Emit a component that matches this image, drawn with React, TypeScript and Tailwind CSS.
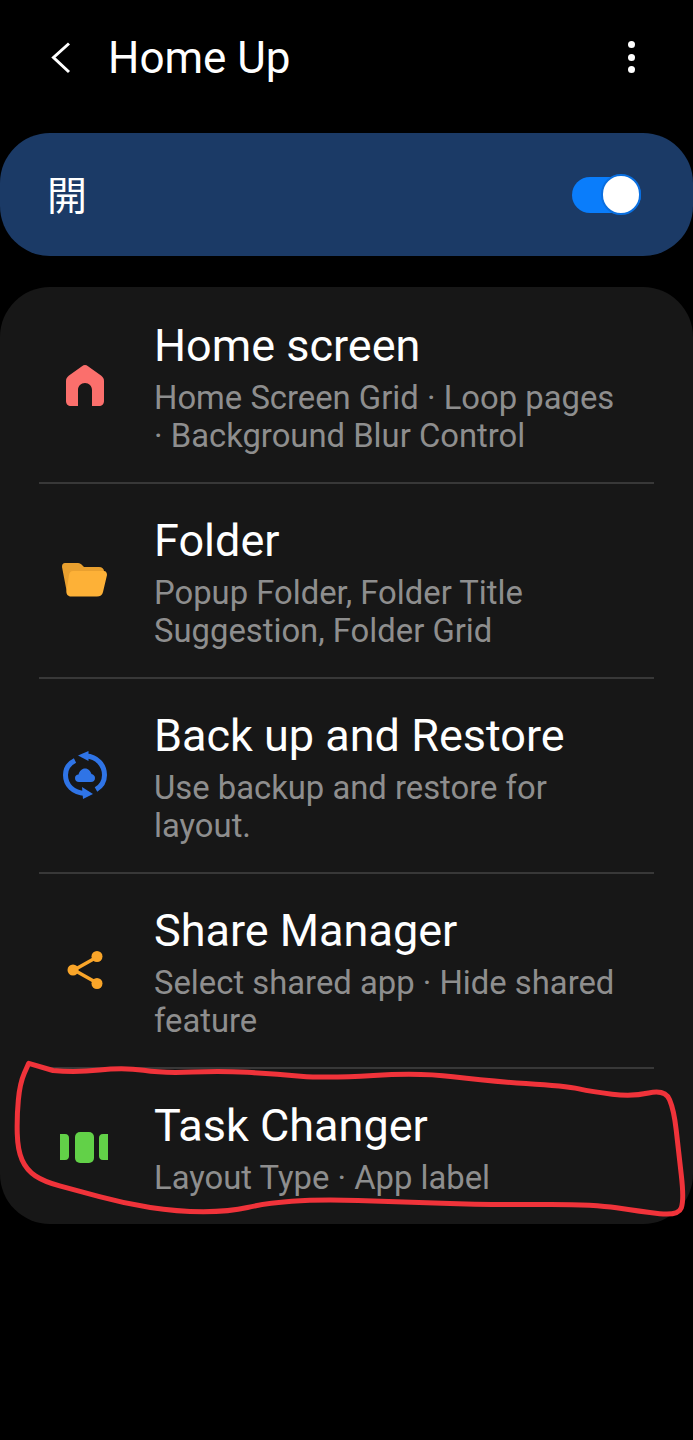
import React from 'react';

const FONT = "font-['Roboto','Noto_Sans_CJK_TC',sans-serif]";

const HomeIcon = () => (
    <svg width="38" height="41" viewBox="0 0 38 41">
        <path
            fillRule="evenodd"
            fill="#fb6f6c"
            d="M19 0 C20 0 21 .5 22 1.200 L35 10.500 C37 12 38 13.500 38 16 L38 36 C38 39 36 41 33 41 L26 41 L26 25 C26 21 23 18 19 18 C15 18 12 21 12 25 L12 41 L5 41 C2 41 0 39 0 36 L0 16 C0 13.500 1 12 3 10.500 L16 1.200 C17 .5 18 0 19 0 Z"
        />
    </svg>
);

const FolderIcon = () => (
    <svg className="-ml-[2px]" width="45" height="34" viewBox="0 0 45 34">
        <path fill="#e9a02f" d="M3 0 L16 0 C18 0 19 1 20 2 L22 4 L37 4 C40 4 42 6 42 8 L10 30 L5 30 L0 4 C0 1 1 0 3 0 Z" />
        <path fill="#fdb137" d="M11 8 L42 8 C44 8 45 10 45 12 L41 29 C40.500 32 38 33.500 35 33.500 L9 33.500 C6 33.500 4 31 4.500 28 L7 12 C7.500 9.500 9 8 11 8 Z" />
    </svg>
);

const SyncIcon = () => (
    <svg width="44" height="48" viewBox="0 0 44 48" fill="none">
        <path d="M12 9.500 C5 13 2.500 19 2.500 24 C2.500 34 10 42 22 42.500" stroke="#2f74e6" strokeWidth="5" />
        <path d="M33 38.500 C39 35 41.500 29 41.500 24 C41.500 14 34 5.500 23 5" stroke="#2f74e6" strokeWidth="5" />
        <path d="M25.500 0 L15 4.500 L25.500 10 Z" fill="#2f74e6" />
        <path d="M19 36 L30 43 L20 48 Z" fill="#2f74e6" />
        <path
            fill="#2f74e6"
            d="M16 31 C13.500 31 12 29.500 12 27 C12 25 13.500 23.500 15.500 23.500 C16.500 20 19 17.500 22 17.500 C25.500 17.500 27.500 20 28.500 23 C30.500 23.500 32 25 32 27 C32 29.500 30.500 31 28 31 Z"
        />
    </svg>
);

const ShareIcon = () => (
    <svg className="ml-[1px]" width="38" height="40" viewBox="0 0 38 40" fill="#f9a529">
        <path d="M7 20 L31 6.500 M7 20 L31 33.500" stroke="#f9a529" strokeWidth="3.500" />
        <circle cx="6" cy="20" r="5.500" />
        <circle cx="30" cy="6.500" r="5.500" />
        <circle cx="30" cy="33.500" r="5.500" />
    </svg>
);

const TaskIcon = () => (
    <svg className="-ml-[2px]" width="48" height="31" viewBox="0 0 48 31" fill="#62d148">
        <path d="M0 2 L5 2 C8 2 9 4 9 6 L9 24 C9 26 8 28 5 28 L0 28 Z" />
        <rect x="15" y="0" width="19" height="31" rx="5" />
        <path d="M48 2 L43 2 C40 2 39 4 39 6 L39 24 C39 26 40 28 43 28 L48 28 Z" />
    </svg>
);

interface Row {
    title: string;
    lines: string[];
    icon: React.ReactNode;
}

const rows: Row[] = [
    { title: 'Home screen', lines: ['Home Screen Grid · Loop pages', '· Background Blur Control'], icon: <HomeIcon /> },
    { title: 'Folder', lines: ['Popup Folder, Folder Title', 'Suggestion, Folder Grid'], icon: <FolderIcon /> },
    { title: 'Back up and Restore', lines: ['Use backup and restore for', 'layout.'], icon: <SyncIcon /> },
    { title: 'Share Manager', lines: ['Select shared app · Hide shared', 'feature'], icon: <ShareIcon /> },
    { title: 'Task Changer', lines: ['Layout Type · App label'], icon: <TaskIcon /> },
];

// red pen scribble round the last row, traced from the reference
const scribble = [
    [65, 40], [45, 100], [38, 200], [40, 300], [60, 360], [100, 395], [170, 420], [280, 460], [400, 485], [520, 485],
    [600, 460], [720, 448], [900, 455], [1100, 465], [1340, 462], [1450, 485], [1535, 497], [1548, 450], [1535, 300],
    [1525, 180], [1505, 118], [1430, 140], [1340, 125], [1280, 108], [1100, 93], [950, 68], [740, 85], [620, 72],
    [500, 62], [370, 70], [280, 52], [170, 68], [70, 55],
].map(([x, y]) => [(x * 693) / 1568, 1050 + y / 3]);

const scribblePath = scribble
    .map(([x, y], i) => {
        if (i === 0) return `M${x} ${y}`;
        const [px, py] = scribble[i - 1];
        return `Q${px} ${py} ${(px + x) / 2} ${(py + y) / 2}`;
    })
    .join(' ');

export default function App() {
    return (
        <div className={`relative h-[1440px] w-[693px] overflow-hidden bg-black ${FONT}`}>
            <div className="flex h-[133px] items-start justify-between pl-[51px] pr-[58px] pt-[33px]">
                <div className="flex items-center">
                    <svg width="20" height="32" viewBox="0 0 20 32" fill="none">
                        <path d="M18 1.500 L2.500 15.500 L18 30" stroke="#fff" strokeWidth="3" />
                    </svg>
                    <span className="ml-[37px] text-[44px] leading-[50px] text-white">Home Up</span>
                </div>
                <div className="mt-[8px] flex flex-col gap-[5.500px]">
                    <div className="size-[7px] rounded-full bg-white" />
                    <div className="size-[7px] rounded-full bg-white" />
                    <div className="size-[7px] rounded-full bg-white" />
                </div>
            </div>

            <div className="flex h-[123px] items-center justify-between rounded-[50px] bg-[#1b3a66] pl-[47px] pr-[52px]">
                <span className="mt-[4px] text-[40px] leading-[50px] text-white">開</span>
                <div className="flex h-[36px] w-[69px] items-center justify-end rounded-full bg-[#0a7dfb]">
                    <div className="h-[41px] w-[40px] rounded-full border-2 border-[#0a6fe0] bg-white" />
                </div>
            </div>

            <div className="mt-[31px] rounded-[50px] bg-[#171717]">
                {rows.map((row, i) => (
                    <div key={row.title}>
                        {i > 0 && <div className="mx-[39px] h-[2px] bg-[#383838]" />}
                        <div className={`flex items-center pb-[27px] ${i === 0 ? 'pt-[34px]' : 'pt-[32px]'}`}>
                            <div className={`flex w-[155px] shrink-0 justify-center pl-[15px] ${i === 4 ? 'mb-[4px]' : 'mb-[6px]'}`}>
                                {row.icon}
                            </div>
                            <div className="-ml-[1px] min-w-0">
                                <div className="mb-[8px] text-[45px] leading-[50px] whitespace-nowrap text-white">{row.title}</div>
                                {row.lines.map((line) => (
                                    <div key={line} className="text-[32.800px] leading-[38px] whitespace-nowrap text-[#8e8e8e]">
                                        {line}
                                    </div>
                                ))}
                            </div>
                        </div>
                    </div>
                ))}
            </div>

            <svg className="pointer-events-none absolute inset-0" width="693" height="1440" fill="none">
                <path d={`${scribblePath} Z`} stroke="#f0333a" strokeWidth="5" strokeLinejoin="round" strokeLinecap="round" />
            </svg>
        </div>
    );
}
